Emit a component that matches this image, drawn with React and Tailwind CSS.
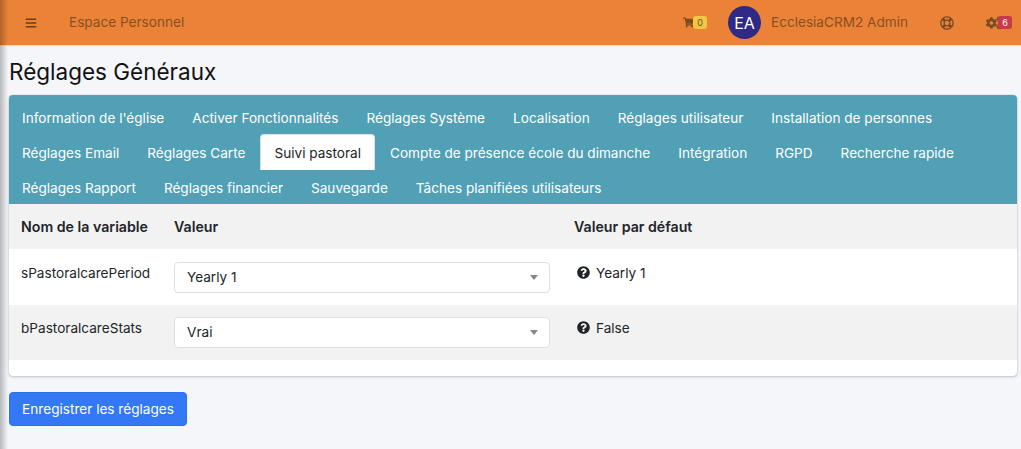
import React from "react";
import { FaBars, FaShoppingCart, FaRegLifeRing, FaCogs, FaQuestionCircle } from "react-icons/fa";

const tabRows = [
  ["Information de l'église", "Activer Fonctionnalités", "Réglages Système", "Localisation", "Réglages utilisateur", "Installation de personnes"],
  ["Réglages Email", "Réglages Carte", "Suivi pastoral", "Compte de présence école du dimanche", "Intégration", "RGPD", "Recherche rapide"],
  ["Réglages Rapport", "Réglages financier", "Sauvegarde", "Tâches planifiées utilisateurs"],
];

function Tab({ label }) {
  const active = label === "Suivi pastoral";
  return (
    <a
      className={
        active
          ? "h-[36px] -mt-[2px] pt-[2px] px-[13px] flex items-center bg-white text-[#212529] rounded-t-[4px] border border-[#dee2e6] border-b-0"
          : "h-[35px] px-[13px] flex items-center text-white"
      }
    >
      {label}
    </a>
  );
}

function SettingRow({ name, value, fallback, bg, h, selectTop, textTop }) {
  return (
    <div className={`flex ${bg} ${h}`}>
      <div className={`w-[165px] pl-[12px] ${textTop}`}>{name}</div>
      <div className={`w-[400px] ${selectTop}`}>
        <div className="w-[376px] h-[31px] bg-white border border-[#dcdfe3] rounded-[4px] flex items-center justify-between pl-[12px] pr-[11px]">
          <span>{value}</span>
          <span className="w-0 h-0 border-x-[4px] border-x-transparent border-t-[5px] border-t-[#888]"></span>
        </div>
      </div>
      <div className={`flex items-start gap-[6px] pl-[3px] ${textTop}`}>
        <FaQuestionCircle className="text-[13px] mt-[3px] text-[#212529]" />
        <span>{fallback}</span>
      </div>
    </div>
  );
}

export default function App() {
  return (
    <div className="relative h-[449px] overflow-hidden bg-[#f4f6f9] text-[13.6px] text-[#212529] font-['Inter','Liberation_Sans',sans-serif]">
      <header className="h-[46px] bg-[#ea8337] border-b border-[#dee2e6] flex items-center text-[#8a4f22]">
        <FaBars className="ml-[25px] text-[12px] text-[#6b3f1c]" />
        <span className="ml-[32px]">Espace Personnel</span>
        <div className="ml-auto flex items-center">
          <div className="flex items-center">
            <FaShoppingCart className="text-[11px] text-[#7a4a22]" />
            <span className="-ml-[1px] w-[14px] h-[13px] rounded-[3px] bg-[#f4c542] text-[#6b5a2a] text-[9px] flex items-center justify-center">0</span>
          </div>
          <div className="ml-[21px] w-[33px] h-[33px] rounded-full bg-[#2f2a86] text-white text-[16px] flex items-center justify-center">EA</div>
          <span className="ml-[10px]">EcclesiaCRM2 Admin</span>
          <FaRegLifeRing className="ml-[32px] text-[14px] text-[#7a4a22]" />
          <div className="ml-[32px] mr-[9px] flex items-center">
            <FaCogs className="text-[16px] text-[#7a4a22]" />
            <span className="-ml-[4px] w-[14px] h-[13px] rounded-[3px] bg-[#c9394a] text-white text-[9px] flex items-center justify-center">6</span>
          </div>
        </div>
      </header>

      <h1 className="ml-[9px] mt-[11px] h-[38px] text-[22.5px] leading-[30px] text-[#111]">Réglages Généraux</h1>

      <div className="ml-[9px] w-[1008px] h-[281px] bg-white rounded-[4px] shadow-[0_0_1px_rgba(0,0,0,.3),0_1px_3px_rgba(0,0,0,.2)] overflow-hidden">
        <div className="h-[109px] bg-[#52a0b6] pt-[6px]">
          {tabRows.map((row) => (
            <div key={row[0]} className="flex gap-[2px] h-[35px]">
              {row.map((t) => (
                <Tab key={t} label={t} />
              ))}
            </div>
          ))}
        </div>
        <div className="flex h-[45px] bg-[#f2f2f2] font-semibold text-[14.2px] items-center">
          <div className="w-[165px] pl-[12px]">Nom de la variable</div>
          <div className="w-[400px]">Valeur</div>
          <div>Valeur par défaut</div>
        </div>
        <SettingRow name="sPastoralcarePeriod" value="Yearly 1" fallback="Yearly 1" bg="bg-white" h="h-[56px]" selectTop="pt-[13px]" textTop="pt-[14px]" />
        <SettingRow name="bPastoralcareStats" value="Vrai" fallback="False" bg="bg-[#f2f2f2]" h="h-[55px]" selectTop="pt-[12px]" textTop="pt-[13px]" />
      </div>

      <button className="ml-[9px] mt-[16px] w-[178px] h-[34px] rounded-[4px] bg-[#3478f6] border border-[#2f6fe8] text-white">
        Enregistrer les réglages
      </button>

      <div className="absolute inset-y-0 left-0 w-[8px] bg-gradient-to-r from-black/25 to-transparent pointer-events-none"></div>
    </div>
  );
}
